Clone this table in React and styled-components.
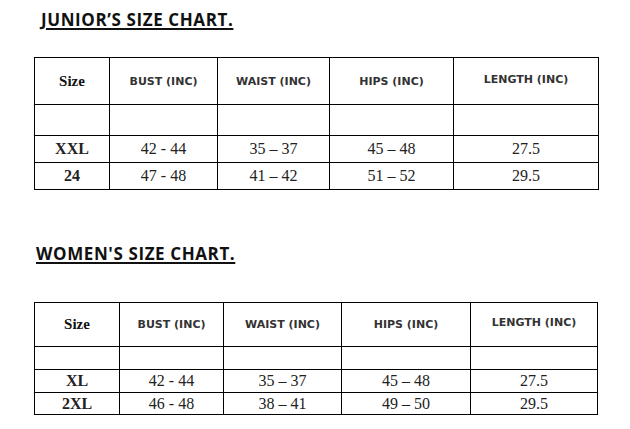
import styled, { createGlobalStyle } from "styled-components";

const GlobalStyle = createGlobalStyle`
  html, body {
    margin: 0;
    padding: 0;
    background: #fff;
  }
`;

const Page = styled.div`
  width: 630px;
  height: 429px;
  display: flex;
  flex-direction: column;
  background: #fff;
  overflow: hidden;
`;

const Section = styled.section`
  display: flex;
  flex-direction: column;
  padding-left: 34px;
  margin-top: ${(p) => p.$top}px;
`;

const Title = styled.h2`
  margin: 0 0 0 ${(p) => p.$indent}px;
  font-family: "Open Sans", Lato, sans-serif;
  font-weight: 700;
  font-size: 17px;
  letter-spacing: 0.6px;
  line-height: 20px;
  height: 20px;
  color: #111;
  text-decoration: underline;
  text-decoration-thickness: 2px;
  text-underline-offset: 2px;
`;

const Table = styled.table`
  border-collapse: collapse;
  table-layout: fixed;
  margin-top: ${(p) => p.$gap}px;
  width: ${(p) => p.$width}px;
`;

const Row = styled.tr`
  height: ${(p) => p.$h}px;
`;

const HeadCell = styled.th`
  border: 1px solid #000;
  padding: 0 0 ${(p) => (p.$lift ? 4 : 0)}px;
  font-family: "DejaVu Sans", Verdana, sans-serif;
  font-weight: 700;
  font-size: 11px;
  color: #333;
  text-align: center;
  vertical-align: middle;
`;

const SizeHead = styled(HeadCell)`
  font-family: "Liberation Serif", "Times New Roman", serif;
  font-size: 15px;
  color: #111;
`;

const Cell = styled.td`
  border: 1px solid #000;
  padding: 0;
  font-family: "Liberation Serif", "Times New Roman", serif;
  font-size: 16px;
  font-weight: ${(p) => (p.$bold ? 700 : 400)};
  color: #222;
  text-align: center;
  vertical-align: middle;
`;

const headers = ["BUST (INC)", "WAIST (INC)", "HIPS (INC)", "LENGTH (INC)"];

const charts = [
  {
    title: "JUNIOR’S SIZE CHART.",
    indent: 7,
    top: 10,
    gap: 27,
    cols: [75, 108, 112, 124, 145],
    heights: [47, 31, 27, 27],
    rows: [
      ["XXL", "42 - 44", "35 – 37", "45 – 48", "27.5"],
      ["24", "47 - 48", "41 – 42", "51 – 52", "29.5"],
    ],
  },
  {
    title: "WOMEN'S SIZE CHART.",
    indent: 2,
    top: 54,
    gap: 38,
    cols: [85, 104, 118, 129, 127],
    heights: [44, 23, 23, 22],
    rows: [
      ["XL", "42 - 44", "35 – 37", "45 – 48", "27.5"],
      ["2XL", "46 - 48", "38 – 41", "49 – 50", "29.5"],
    ],
  },
];

const Chart = ({ chart }) => {
  const width = chart.cols.reduce((a, b) => a + b, 0);
  return (
    <Section $top={chart.top}>
      <Title $indent={chart.indent}>{chart.title}</Title>
      <Table $gap={chart.gap} $width={width}>
        <colgroup>
          {chart.cols.map((w, i) => (
            <col key={i} style={{ width: w }} />
          ))}
        </colgroup>
        <thead>
          <Row $h={chart.heights[0]}>
            <SizeHead>Size</SizeHead>
            {headers.map((h, i) => (
              <HeadCell key={h} $lift={i === 3}>
                {h}
              </HeadCell>
            ))}
          </Row>
        </thead>
        <tbody>
          <Row $h={chart.heights[1]}>
            {chart.cols.map((_, i) => (
              <Cell key={i} />
            ))}
          </Row>
          {chart.rows.map((r, ri) => (
            <Row key={ri} $h={chart.heights[ri + 2]}>
              {r.map((v, i) => (
                <Cell key={i} $bold={i === 0}>
                  {v}
                </Cell>
              ))}
            </Row>
          ))}
        </tbody>
      </Table>
    </Section>
  );
};

export default function App() {
  return (
    <Page>
      <GlobalStyle />
      {charts.map((c) => (
        <Chart key={c.title} chart={c} />
      ))}
    </Page>
  );
}
